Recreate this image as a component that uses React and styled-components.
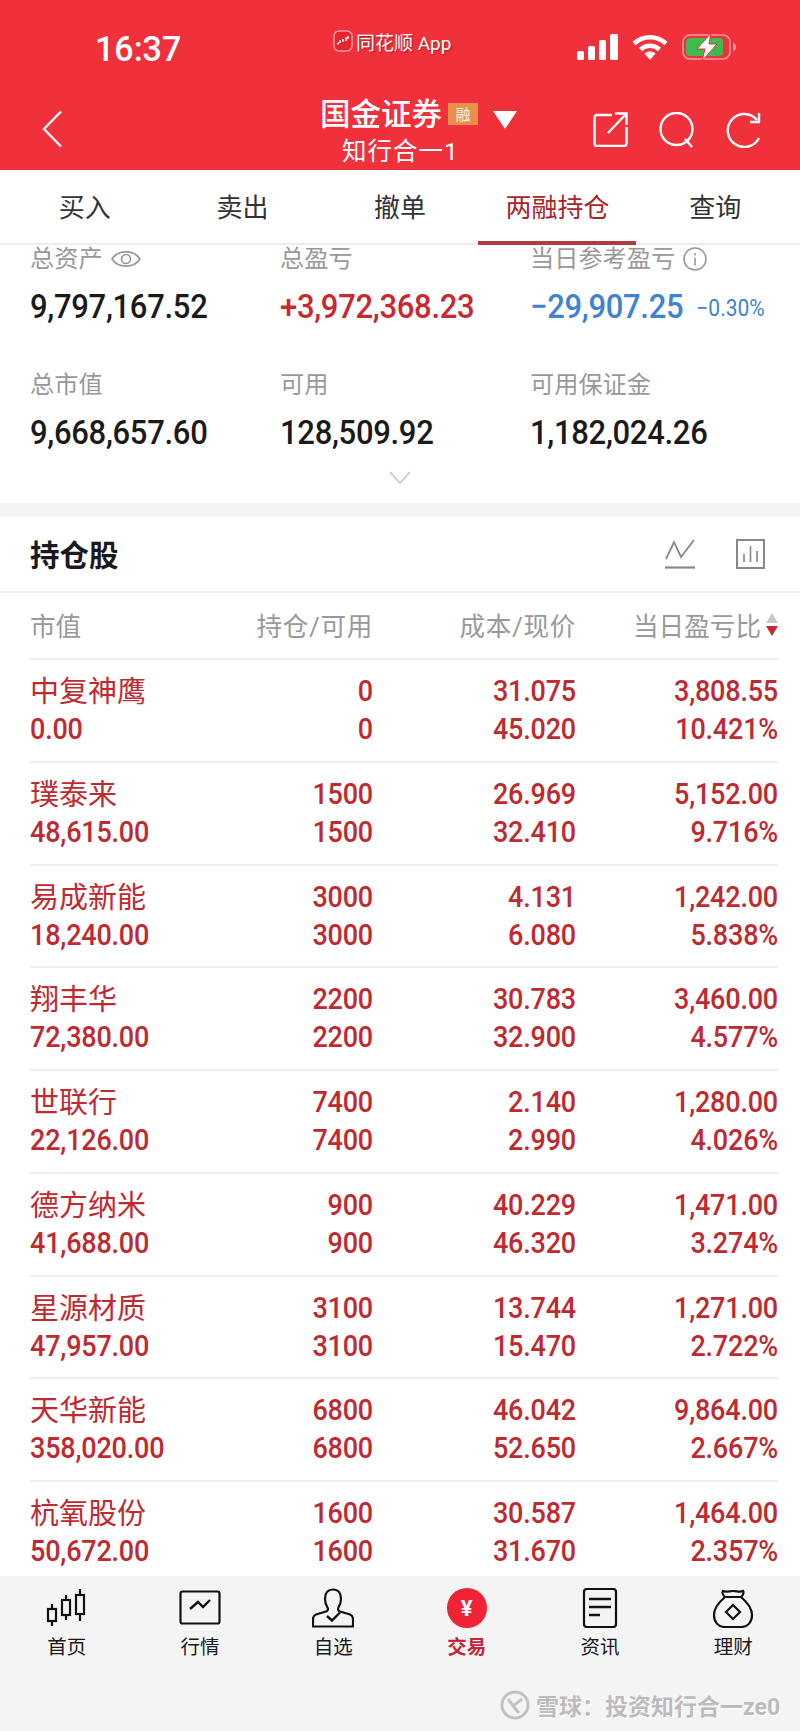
import styled, { createGlobalStyle } from "styled-components";

const GlobalStyle = createGlobalStyle`
  html, body { margin: 0; padding: 0; background: #fff; }
  * { box-sizing: border-box; }
`;

const FONT = `Roboto, "Noto Sans CJK SC", sans-serif`;
const RED = "#bf2a30";

const holdings = [
  ["中复神鹰", "0.00", "0", "0", "31.075", "45.020", "3,808.55", "10.421%"],
  ["璞泰来", "48,615.00", "1500", "1500", "26.969", "32.410", "5,152.00", "9.716%"],
  ["易成新能", "18,240.00", "3000", "3000", "4.131", "6.080", "1,242.00", "5.838%"],
  ["翔丰华", "72,380.00", "2200", "2200", "30.783", "32.900", "3,460.00", "4.577%"],
  ["世联行", "22,126.00", "7400", "7400", "2.140", "2.990", "1,280.00", "4.026%"],
  ["德方纳米", "41,688.00", "900", "900", "40.229", "46.320", "1,471.00", "3.274%"],
  ["星源材质", "47,957.00", "3100", "3100", "13.744", "15.470", "1,271.00", "2.722%"],
  ["天华新能", "358,020.00", "6800", "6800", "46.042", "52.650", "9,864.00", "2.667%"],
  ["杭氧股份", "50,672.00", "1600", "1600", "30.587", "31.670", "1,464.00", "2.357%"],
];

const tabs = ["买入", "卖出", "撤单", "两融持仓", "查询"];

export default function App() {
  return (
    <Page>
      <GlobalStyle />
      <Header>
        <StatusBar>
          <Time>16:37</Time>
          <AppMark>
            <svg width="20" height="22" viewBox="0 0 20 22">
              <rect x="1" y="1" width="18" height="20" rx="5" fill="#e8222e" stroke="#f4a0a4" strokeWidth="1.5" />
              <path d="M4 14l2-1M7 10v3M10 9v3M13 7v4M15 6v3" stroke="#fff" strokeWidth="1.6" />
            </svg>
            <AppName>同花顺 App</AppName>
          </AppMark>
          <StatusIcons>
            <svg width="41" height="26" viewBox="0 0 41 26" fill="#fff">
              <rect x="0" y="17" width="7" height="9" rx="1.5" />
              <rect x="11" y="12" width="7" height="14" rx="1.5" />
              <rect x="22" y="6" width="7" height="20" rx="1.5" />
              <rect x="33" y="0" width="8" height="26" rx="1.5" />
            </svg>
            <svg width="36" height="26" viewBox="0 0 36 26" fill="none" stroke="#fff" strokeWidth="4.5">
              <path d="M2 9.5C11 1 25 1 34 9.5" />
              <path d="M8.5 15.5C14 10.5 22 10.5 27.500 15.5" />
              <path d="M18 26l-5.500-6.500c3-2.600 8-2.600 11 0z" fill="#fff" stroke="none" />
            </svg>
            <svg width="54" height="28" viewBox="0 0 54 28">
              <rect x="1" y="2" width="47" height="24" rx="7" fill="none" stroke="#f79a9e" strokeWidth="1.600" />
              <rect x="4" y="5" width="37" height="18" rx="4" fill="#3fbb4d" />
              <path d="M51 10v8c2-.5 3-2 3-4s-1-3.500-3-4z" fill="#f79a9e" />
              <path d="M29 0L15 16h8l-3 12 15-17h-8z" fill="#fff" stroke="#f0303a" strokeWidth="1" />
            </svg>
          </StatusIcons>
        </StatusBar>
        <NavBar>
          <BackCell>
            <svg width="22" height="38" viewBox="0 0 22 38" fill="none" stroke="#fff" strokeWidth="2.400">
              <path d="M20 1.500L3 19l17 17.500" />
            </svg>
          </BackCell>
          <TitleCell>
            <TitleRow>
              <Title>国金证券</Title>
              <Badge>融</Badge>
              <Caret />
            </TitleRow>
            <Subtitle>知行合一1</Subtitle>
          </TitleCell>
          <NavIcons>
            <svg width="35" height="35" viewBox="0 0 35 35" fill="none" stroke="#fff" strokeWidth="2.400">
              <path d="M19 3H4a2.500 2.500 0 0 0-2.500 2.500v26A2.500 2.500 0 0 0 4 34h27a2.500 2.500 0 0 0 2.500-2.500V15" />
              <path d="M15 21L33 2M22 1.500h11.500V13" />
            </svg>
            <svg width="38" height="36" viewBox="0 0 38 36" fill="none" stroke="#fff" strokeWidth="2.400">
              <circle cx="18.500" cy="17" r="16" />
              <path d="M27 27l7 8" />
            </svg>
            <svg width="36" height="36" viewBox="0 0 36 36" fill="none" stroke="#fff" strokeWidth="2.400">
              <path d="M31 8A16.500 16.500 0 1 0 33 26" />
              <path d="M33 1v9h-9" />
            </svg>
          </NavIcons>
        </NavBar>
      </Header>

      <TabBar>
        {tabs.map((tab) => (
          <Tab key={tab} $active={tab === "两融持仓"}>{tab}</Tab>
        ))}
      </TabBar>

      <Content>
        <Summary>
          <SummaryRow>
            <Stat>
              <StatLabel>
                总资产
                <svg width="30" height="22" viewBox="0 0 30 22" fill="none" stroke="#999" strokeWidth="1.700">
                  <path d="M1 11C7 1.500 23 1.500 29 11 23 20.500 7 20.500 1 11z" />
                  <circle cx="15" cy="11" r="4.500" />
                </svg>
              </StatLabel>
              <StatValue>9,797,167.52</StatValue>
            </Stat>
            <Stat>
              <StatLabel>总盈亏</StatLabel>
              <StatValue $color="#c8282e">+3,972,368.23</StatValue>
            </Stat>
            <Stat>
              <StatLabel>
                当日参考盈亏
                <svg width="24" height="24" viewBox="0 0 24 24" fill="none" stroke="#999" strokeWidth="1.600">
                  <circle cx="12" cy="12" r="11" />
                  <path d="M12 10.500v8M12 6v2.500" />
                </svg>
              </StatLabel>
              <ValueLine>
                <StatValue $color="#3f83d0">−29,907.25</StatValue>
                <StatPercent>−0.30%</StatPercent>
              </ValueLine>
            </Stat>
          </SummaryRow>
          <SummaryRow>
            <Stat>
              <StatLabel>总市值</StatLabel>
              <StatValue>9,668,657.60</StatValue>
            </Stat>
            <Stat>
              <StatLabel>可用</StatLabel>
              <StatValue>128,509.92</StatValue>
            </Stat>
            <Stat>
              <StatLabel>可用保证金</StatLabel>
              <StatValue>1,182,024.26</StatValue>
            </Stat>
          </SummaryRow>
          <Expand>
            <svg width="22" height="13" viewBox="0 0 22 13" fill="none" stroke="#c4c4c4" strokeWidth="1.600">
              <path d="M1 1l10 11L21 1" />
            </svg>
          </Expand>
        </Summary>

        <Band />

        <SectionHead>
          <SectionTitle>持仓股</SectionTitle>
          <SectionIcons>
            <svg width="31" height="30" viewBox="0 0 31 30" fill="none" stroke="#888" strokeWidth="1.800">
              <path d="M2 20L10 3l7 15L30 1" />
              <path d="M1 28.500h30" strokeWidth="2.200" />
            </svg>
            <svg width="29" height="30" viewBox="0 0 29 30" fill="none" stroke="#888" strokeWidth="2">
              <rect x="1" y="1" width="27" height="28" />
              <path d="M8 23v-8M14.500 23V7M21 23V12" strokeWidth="1.600" />
            </svg>
          </SectionIcons>
        </SectionHead>

        <Table>
          <TableHead>
            <span>市值</span>
            <HeadRight>持仓/可用</HeadRight>
            <HeadRight>成本/现价</HeadRight>
            <SortHead>
              当日盈亏比
              <SortArrows>
                <ArrowUp />
                <ArrowDown />
              </SortArrows>
            </SortHead>
          </TableHead>
          {holdings.map((row) => (
            <Row key={row[0]}>
              <Name>{row[0]}</Name>
              <Num>{row[2]}</Num>
              <Num>{row[4]}</Num>
              <Num>{row[6]}</Num>
              <Num $left>{row[1]}</Num>
              <Num>{row[3]}</Num>
              <Num>{row[5]}</Num>
              <Num>{row[7]}</Num>
            </Row>
          ))}
        </Table>
      </Content>

      <BottomNav>
        <NavItem>
          <svg width="42" height="38" viewBox="0 0 42 38" fill="none" stroke="#111" strokeWidth="2.200">
            <rect x="2" y="20" width="8" height="12" />
            <path d="M6 15v5M6 32v5" />
            <rect x="16" y="11" width="8" height="15" />
            <path d="M20 6v5M20 26v5" />
            <rect x="30" y="6" width="8" height="19" />
            <path d="M34 0v6M34 25v7" />
          </svg>
          <NavLabel>首页</NavLabel>
        </NavItem>
        <NavItem>
          <svg width="42" height="38" viewBox="0 0 42 38" fill="none" stroke="#111" strokeWidth="2.200">
            <rect x="1.500" y="2.500" width="39" height="32" rx="2" />
            <path d="M11 20l8-7 5 5 7-7" strokeWidth="2.400" />
          </svg>
          <NavLabel>行情</NavLabel>
        </NavItem>
        <NavItem>
          <svg width="42" height="40" viewBox="0 0 42 40" fill="none" stroke="#111" strokeWidth="2.200">
            <path d="M21 1.500c-6.500 0-8 5-8 9.500 0 3.500 1 6 2.500 8.500.8 1.300.5 3-.8 3.700L4 26.500c-2 .8-3 2.200-3 4.500v7.500h40V31c0-2.300-1-3.700-3-4.500l-10.700-3.300c-1.300-.7-1.600-2.400-.8-3.700 1.500-2.500 2.500-5 2.500-8.500 0-4.500-1.500-9.500-8-9.500z" />
            <path d="M15 28l5 4.500 8-8" strokeWidth="2.400" />
          </svg>
          <NavLabel>自选</NavLabel>
        </NavItem>
        <NavItem>
          <TradeIcon>¥</TradeIcon>
          <NavLabel $active>交易</NavLabel>
        </NavItem>
        <NavItem>
          <svg width="42" height="40" viewBox="0 0 42 40" fill="none" stroke="#111" strokeWidth="2.200">
            <rect x="5" y="1" width="32" height="38" rx="3" />
            <path d="M10 11h22M10 19h22M10 27h11" strokeWidth="2.400" />
          </svg>
          <NavLabel>资讯</NavLabel>
        </NavItem>
        <NavItem>
          <svg width="42" height="40" viewBox="0 0 42 40" fill="none" stroke="#111" strokeWidth="2.200">
            <path d="M13 9c-2-2-3.500-4-2-6 3 1.500 6 0 10 0s7 1.500 10 0c1.500 2 0 4-2 6z" />
            <path d="M13 9C6 15 2 21 2 27c0 7 4 12 11 12h16c7 0 11-5 11-12 0-6-4-12-11-18" />
            <path d="M21 17l7 7-7 7-7-7z" />
          </svg>
          <NavLabel>理财</NavLabel>
        </NavItem>
        <Watermark>
          <svg width="30" height="30" viewBox="0 0 30 30" fill="none" stroke="#c2c2c2" strokeWidth="3">
            <circle cx="15" cy="15" r="13" />
            <path d="M8 9l9 12M22 9l-9 7 6 7" />
          </svg>
          <WatermarkText>雪球：投资知行合一ze0</WatermarkText>
        </Watermark>
      </BottomNav>
    </Page>
  );
}

const Page = styled.div`
  width: 800px;
  height: 1731px;
  display: flex;
  flex-direction: column;
  overflow: hidden;
  font-family: ${FONT};
  background: #fff;
`;

const Header = styled.header`
  height: 170px;
  flex: none;
  background: #f0303a;
  color: #fff;
  border-bottom: 1px solid #d92d36;
`;

const StatusBar = styled.div`
  height: 88px;
  padding: 33px 64px 0 95px;
  display: flex;
  align-items: flex-start;
`;

const Time = styled.div`
  width: 238px;
  font-size: 34px;
  line-height: 30px;
  font-weight: 500;
  transform: scaleY(1.05);
`;

const AppMark = styled.div`
  display: flex;
  align-items: center;
  gap: 3px;
  height: 20px;
  margin-top: -2px;
`;

const AppName = styled.span`
  font-size: 19px;
  text-shadow: 1px 1px 1px rgba(120, 0, 0, 0.5);
`;

const StatusIcons = styled.div`
  margin-left: auto;
  display: flex;
  align-items: center;
  gap: 14px;
  height: 28px;
`;

const NavBar = styled.div`
  display: grid;
  grid-template-columns: 320px 198px 1fr;
  height: 81px;
`;

const BackCell = styled.div`
  padding: 22px 0 0 41px;
`;

const TitleCell = styled.div`
  padding-top: 8px;
`;

const TitleRow = styled.div`
  display: flex;
  align-items: center;
  height: 38px;
`;

const Title = styled.span`
  font-size: 30.500px;
  font-weight: 500;
  line-height: 38px;
`;

const Badge = styled.span`
  width: 30px;
  height: 22px;
  margin-left: 6px;
  margin-top: -3px;
  display: flex;
  align-items: center;
  justify-content: center;
  font-size: 15px;
  background: #e8914a;
  color: #fff3e6;
`;

const Caret = styled.span`
  margin: 10px 0 0 15px;
  border-left: 12px solid transparent;
  border-right: 12px solid transparent;
  border-top: 18px solid #fff;
`;

const Subtitle = styled.div`
  margin-top: 3px;
  padding-left: 22px;
  font-size: 24.500px;
  line-height: 30px;
  letter-spacing: 1px;
`;

const NavIcons = styled.div`
  padding: 24px 38px 0 75px;
  display: flex;
  align-items: flex-start;
  justify-content: space-between;
`;

const TabBar = styled.nav`
  height: 75px;
  flex: none;
  padding: 0 6px;
  display: grid;
  grid-template-columns: repeat(5, 1fr);
  border-bottom: 2px solid #ececec;
`;

const Tab = styled.div`
  position: relative;
  display: flex;
  align-items: center;
  justify-content: center;
  padding-bottom: 2px;
  font-size: 26px;
  color: ${(p) => (p.$active ? "#ab2329" : "#333")};
  ${(p) =>
    p.$active &&
    `&::after {
      content: "";
      position: absolute;
      left: -1px;
      right: 0;
      bottom: -2px;
      height: 4px;
      background: #b23a40;
    }`}
`;

const Content = styled.main`
  flex: 1;
  min-height: 0;
  overflow: hidden;
`;

const Summary = styled.section`
  height: 258px;
  padding: 0 0 0 30px;
`;

const SummaryRow = styled.div`
  display: grid;
  grid-template-columns: 250px 250px 1fr;
  height: 126px;
`;

const Stat = styled.div`
  display: flex;
  flex-direction: column;
`;

const StatLabel = styled.div`
  height: 28px;
  display: flex;
  align-items: center;
  gap: 8px;
  font-size: 24.200px;
  line-height: 28px;
  color: #999;
`;

const ValueLine = styled.div`
  display: flex;
  align-items: center;
  gap: 13px;
`;

const StatValue = styled.div`
  margin-top: 14px;
  font-size: 31px;
  line-height: 40px;
  font-weight: 500;
  letter-spacing: -0.3px;
  transform: scaleY(1.1);
  color: ${(p) => p.$color || "#1a1a1a"};
`;

const StatPercent = styled.span`
  margin-top: 16px;
  font-size: 21px;
  color: #3f83d0;
  transform: scaleY(1.1);
`;

const Expand = styled.div`
  margin-top: -26px;
  padding-left: 359px;
  line-height: 0;
`;

const Band = styled.div`
  height: 14px;
  background: #f4f4f4;
`;

const SectionHead = styled.section`
  height: 76px;
  padding: 0 35px 0 30px;
  display: flex;
  align-items: center;
  justify-content: space-between;
  border-bottom: 2px solid #f0f0f0;
`;

const SectionTitle = styled.h2`
  margin: 0 0 2px;
  font-size: 29.500px;
  font-weight: 700;
  color: #1a1a1a;
`;

const SectionIcons = styled.div`
  display: flex;
  gap: 41px;
`;

const Table = styled.section`
  margin: 0 22px 0 30px;
`;

const TableHead = styled.div`
  height: 67px;
  padding-bottom: 2px;
  display: grid;
  grid-template-columns: 1fr 203px 203px 202px;
  align-items: center;
  font-size: 25.600px;
  color: #999;
  border-bottom: 2px solid #f0f0f0;
`;

const HeadRight = styled.span`
  text-align: right;
  letter-spacing: 0.7px;
`;

const SortHead = styled.span`
  display: flex;
  align-items: center;
  justify-content: flex-end;
  gap: 5px;
  white-space: nowrap;
`;

const SortArrows = styled.span`
  display: flex;
  flex-direction: column;
  gap: 3px;
`;

const ArrowUp = styled.i`
  border-left: 6px solid transparent;
  border-right: 6px solid transparent;
  border-bottom: 10px solid #c8c8c8;
`;

const ArrowDown = styled.i`
  border-left: 6px solid transparent;
  border-right: 6px solid transparent;
  border-top: 10px solid #c8282e;
`;

const Row = styled.div`
  height: 102.750px;
  padding-top: 13px;
  display: grid;
  grid-template-columns: 1fr 203px 203px 202px;
  grid-auto-rows: 38px;
  align-items: center;
  color: ${RED};
  border-bottom: 2px solid #f0f0f0;
  &:last-child {
    border-bottom: none;
  }
`;

const Name = styled.span`
  font-size: 29px;
  line-height: 38px;
`;

const Num = styled.span`
  padding-bottom: 2px;
  font-size: 27px;
  line-height: 36px;
  font-weight: 500;
  letter-spacing: -0.2px;
  transform: scaleY(1.1);
  text-align: ${(p) => (p.$left ? "left" : "right")};
`;

const BottomNav = styled.footer`
  position: relative;
  height: 155px;
  flex: none;
  padding-top: 12px;
  display: grid;
  grid-template-columns: repeat(6, 133.333px);
  align-items: start;
  background: #f4f4f4;
`;

const NavItem = styled.div`
  display: flex;
  flex-direction: column;
  align-items: center;
  gap: 8px;
  height: 72px;
  svg {
    height: 40px;
  }
`;

const NavLabel = styled.span`
  font-size: 19.500px;
  line-height: 24px;
  color: ${(p) => (p.$active ? "#c0283a" : "#1a1a1a")};
  font-weight: ${(p) => (p.$active ? 700 : 400)};
`;

const TradeIcon = styled.span`
  width: 40px;
  height: 40px;
  border-radius: 50%;
  display: flex;
  align-items: center;
  justify-content: center;
  background: #ee2336;
  color: #fff;
  font-size: 22px;
  font-weight: 700;
`;

const Watermark = styled.div`
  position: absolute;
  left: 500px;
  top: 112px;
  display: flex;
  align-items: center;
  gap: 6px;
`;

const WatermarkText = styled.span`
  font-size: 23px;
  font-weight: 700;
  color: #bcbcbc;
  text-shadow: 1px 1px 0 #fff;
  white-space: nowrap;
`;
